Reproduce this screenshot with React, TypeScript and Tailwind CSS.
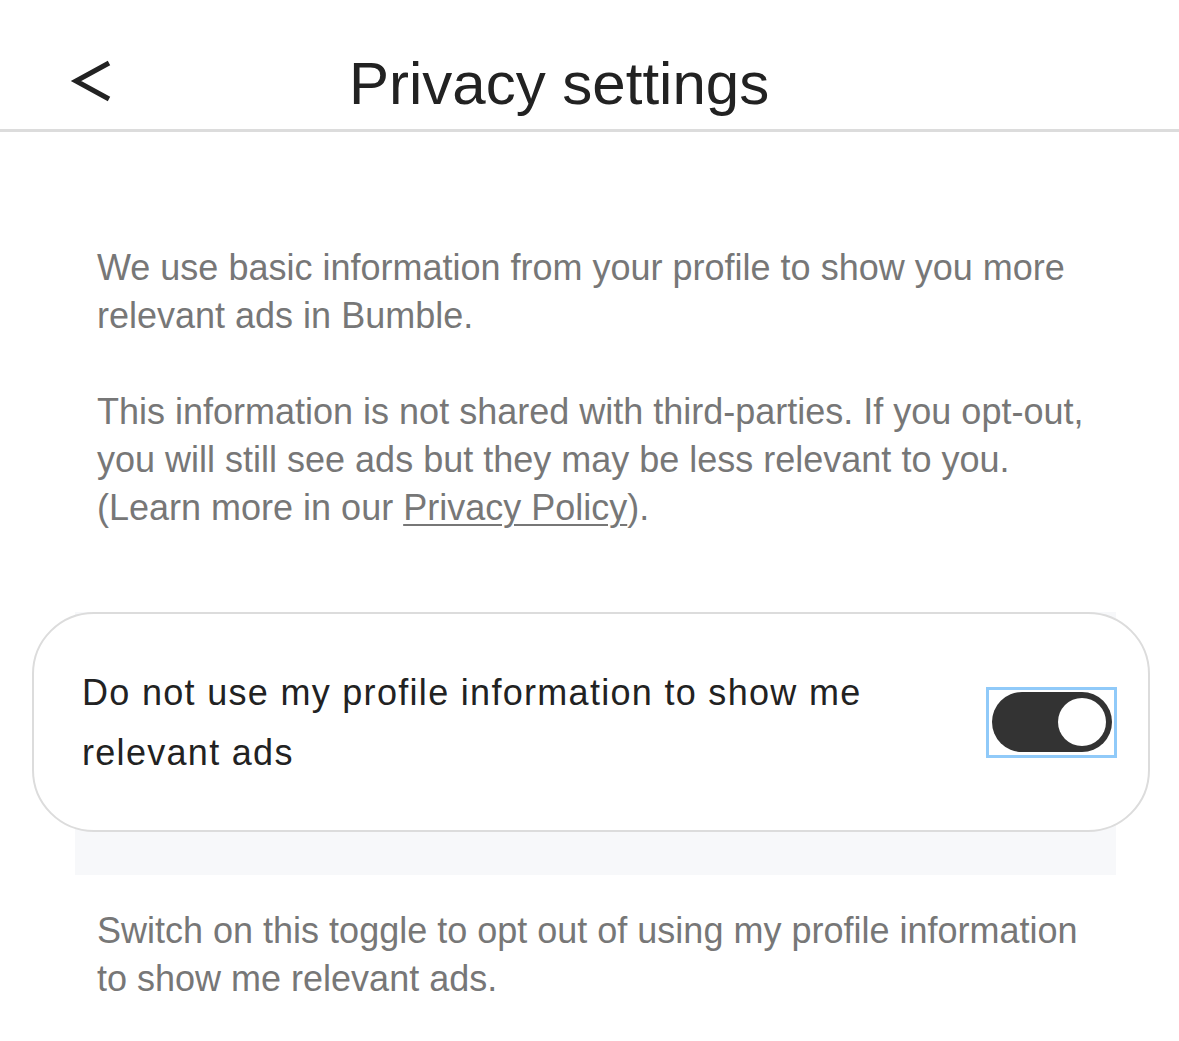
import React, { useState } from 'react';

const FONT = { fontFamily: '"Liberation Sans", Arial, Helvetica, sans-serif' };

const BackIcon: React.FC = () => (
  <svg width="44" height="44" viewBox="0 0 44 44" fill="none" stroke="#222" strokeWidth="5" strokeLinecap="butt" strokeLinejoin="miter">
    <polyline points="40,3 7,21 40,39" />
  </svg>
);

const Toggle: React.FC<{ on: boolean; onChange: () => void }> = ({ on, onChange }) => (
  <button
    onClick={onChange}
    className="flex items-center justify-center w-[131px] h-[71px] border-[3px] border-[#90caf9] shrink-0"
    aria-pressed={on}
  >
    <span className={`flex items-center w-[120px] h-[60px] rounded-full px-[6px] ${on ? 'bg-[#333333] justify-end' : 'bg-[#d9d9d9] justify-start'}`}>
      <span className="block w-[48px] h-[48px] rounded-full bg-white" />
    </span>
  </button>
);

export default function App() {
  const [optOut, setOptOut] = useState(true);

  return (
    <div className="min-h-screen w-full bg-white" style={FONT}>
      <header className="flex items-start h-[132px] border-b-[3px] border-[#dcdcdc]">
        <div className="w-[349px] pl-[69px] pt-[60px]">
          <BackIcon />
        </div>
        <h1 className="pt-[54px] text-[60px] leading-none text-[#222]">Privacy settings</h1>
      </header>

      <section className="pl-[97px] pr-[86px] pt-[112px] text-[36px] leading-[48px] text-[#777777]">
        <p>We use basic information from your profile to show you more relevant ads in Bumble.</p>
        <p className="mt-[48px]">
          This information is not shared with third-parties. If you opt&#8209;out, you will still see ads but they may be less relevant to you. (Learn more in our{' '}
          <a href="#" className="underline underline-offset-[4px] decoration-2">Privacy Policy</a>).
        </p>
      </section>

      <div className="mt-[80px] ml-[75px] mr-[63px] bg-[#f7f8fa] pb-[43px]">
        <div className="-ml-[43px] -mr-[34px] flex items-center justify-between gap-6 rounded-[62px] border-2 border-[#dcdcdc] bg-white pl-[48px] pr-[31px] h-[220px]">
          <p className="text-[36px] leading-[60px] tracking-[1.3px] text-[#222] max-w-[820px] mt-[2px]">
            Do not use my profile information to show me relevant ads
          </p>
          <Toggle on={optOut} onChange={() => setOptOut(!optOut)} />
        </div>
      </div>

      <p className="pl-[97px] pr-[86px] pt-[32px] text-[36px] leading-[48px] text-[#777777]">
        Switch on this toggle to opt out of using my profile information to show me relevant ads.
      </p>
    </div>
  );
}
